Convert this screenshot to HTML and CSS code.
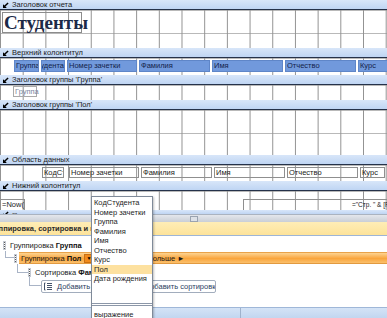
FILE: index.html
```html
<!DOCTYPE html>
<html lang="ru">
<head>
    <meta charset="UTF-8">
    <title>Отчет Студенты - конструктор</title>
    <link rel="stylesheet" href="styles.css">
</head>
<body>
<div class="window">
    <div class="designer">
        <div class="bar"><svg class="pin" viewBox="0 0 6 6"><polygon points="0,6 0,2.2 1.4,3.6 4.6,0.4 5.6,1.4 2.4,4.6 3.8,6"/></svg><span>Заголовок отчета</span></div>
        <div class="grid report-head">
            <div class="title">Студенты</div>
        </div>

        <div class="bar"><svg class="pin" viewBox="0 0 6 6"><polygon points="0,6 0,2.2 1.4,3.6 4.6,0.4 5.6,1.4 2.4,4.6 3.8,6"/></svg><span>Верхний колонтитул</span></div>
        <div class="grid page-head">
            <div class="hlabel" style="width:25px">Группа</div>
            <div class="hlabel right" style="width:24px"><span>КодСтудента</span></div>
            <div class="hlabel" style="width:70px">Номер зачетки</div>
            <div class="hlabel" style="width:71px">Фамилия</div>
            <div class="hlabel" style="width:71px">Имя</div>
            <div class="hlabel" style="width:71px">Отчество</div>
            <div class="hlabel" style="width:40px">Курс</div>
        </div>

        <div class="bar"><svg class="pin" viewBox="0 0 6 6"><polygon points="0,6 0,2.2 1.4,3.6 4.6,0.4 5.6,1.4 2.4,4.6 3.8,6"/></svg><span>Заголовок группы 'Группа'</span></div>
        <div class="grid group-head">
            <div class="glabel">Группа</div>
        </div>

        <div class="bar"><svg class="pin" viewBox="0 0 6 6"><polygon points="0,6 0,2.2 1.4,3.6 4.6,0.4 5.6,1.4 2.4,4.6 3.8,6"/></svg><span>Заголовок группы 'Пол'</span></div>
        <div class="grid sex-head"></div>

        <div class="bar"><svg class="pin" viewBox="0 0 6 6"><polygon points="0,6 0,2.2 1.4,3.6 4.6,0.4 5.6,1.4 2.4,4.6 3.8,6"/></svg><span>Область данных</span></div>
        <div class="grid data-row">
            <div class="field" style="width:22px">КодСтудента</div>
            <div class="field" style="width:70px;margin-left:3px">Номер зачетки</div>
            <div class="field" style="width:71px">Фамилия</div>
            <div class="field" style="width:71px">Имя</div>
            <div class="field" style="width:71px">Отчество</div>
            <div class="field" style="width:25px">Курс</div>
        </div>

        <div class="bar"><svg class="pin" viewBox="0 0 6 6"><polygon points="0,6 0,2.2 1.4,3.6 4.6,0.4 5.6,1.4 2.4,4.6 3.8,6"/></svg><span>Нижний колонтитул</span></div>
        <div class="grid page-foot">
            <div class="field now">=Now()</div>
            <div class="field pages">="Стр. " &amp; [Page] &amp; " из " &amp; [Pages]</div>
        </div>

        <div class="bar cut"><svg class="pin" viewBox="0 0 6 6"><polygon points="0,6 0,2.2 1.4,3.6 4.6,0.4 5.6,1.4 2.4,4.6 3.8,6"/></svg><span>Примечание отчета</span></div>
    </div>

    <div class="splitter"><span class="grip"></span></div>

    <div class="group-pane">
        <div class="pane-title"><span>Группировка, сортировка и итоги</span></div>
        <div class="pane-body">
            <div class="level level-1">
                <span class="handle"></span>
                <span>Группировка <b>Группа</b></span>
            </div>
            <div class="level level-2">
                <span class="handle"></span>
                <div class="active">
                    <span>Группировка <b>Пол</b></span>
                    <span class="drop">▼</span>
                    <span class="more">больше ►</span>
                </div>
            </div>
            <div class="level level-3">
                <span class="handle"></span>
                <span>Сортировка <b>Фамилия</b></span>
            </div>
            <div class="level level-4">
                <div class="add-btn first">
                    <svg class="add-icon" viewBox="0 0 9 9"><path d="M1.5 1h-1v7h1M3 1.5h5M3 3.5h5M3 5.5h5M3 7.5h5" fill="none" stroke="#44536b" stroke-width="1"/></svg>
                    <span>Добавить группу</span>
                </div>
                <div class="add-btn second"><span>Добавить сортировку</span></div>
            </div>
        </div>
        <div class="status"><span class="status-left"></span><span class="status-right"></span></div>
    </div>

    <div class="field-list">
        <div class="items">
            <div class="item">КодСтудента</div>
            <div class="item">Номер зачетки</div>
            <div class="item">Группа</div>
            <div class="item">Фамилия</div>
            <div class="item">Имя</div>
            <div class="item">Отчество</div>
            <div class="item">Курс</div>
            <div class="item selected">Пол</div>
            <div class="item">Дата рождения</div>
        </div>
        <div class="item expr">выражение</div>
    </div>
</div>
</body>
</html>
```

FILE: styles.css
```css
body {
    margin: 0;
    background: #fff;
    font-family: 'Liberation Sans', Arial, sans-serif;
    font-size: 7.5px;
    color: #1b1b1b;
}
.window {
    position: relative;
    width: 387px;
    height: 318px;
    overflow: hidden;
}
.designer {
    display: flex;
    flex-direction: column;
}
.bar {
    height: 9px;
    border-bottom: 1px solid #25324a;
    background: linear-gradient(#d8e6f9, #bfd5f3);
    display: flex;
    align-items: center;
    gap: 3px;
    padding-left: 3px;
    white-space: nowrap;
    overflow: hidden;
}
.pin {
    width: 6px;
    height: 6px;
    flex: none;
}
.bar.cut {
    height: 4px;
    align-items: flex-start;
    border-bottom: none;
    padding-top: 1px;
    box-sizing: border-box;
    color: #555;
}
.grid {
    background-color: #fff;
    background-image: linear-gradient(to right, #929292 1px, transparent 1px), linear-gradient(to bottom, #b9b9b9 1px, transparent 1px);
    background-size: 22.7px 100%, 100% 23px;
    background-position: 22.7px 0, 0 0;
    display: flex;
    align-items: flex-start;
}
.report-head {
    height: 38px;
}
.title {
    margin: 2px 0 0 2px;
    width: 80px;
    height: 21px;
    box-sizing: border-box;
    border: 1px solid #8c8c8c;
    font-family: 'Liberation Serif', 'Times New Roman', serif;
    font-weight: bold;
    font-size: 19px;
    line-height: 19px;
    padding-left: 1px;
    color: #1c2a48;
    white-space: nowrap;
}
.page-head {
    height: 17px;
    padding: 2px 0 0 14px;
    gap: 2px;
    box-sizing: border-box;
}
.hlabel {
    flex: none;
    height: 12px;
    box-sizing: border-box;
    background: #7199dc;
    border: 1px solid #5f86c8;
    color: #14224a;
    line-height: 10px;
    padding-left: 1px;
    white-space: nowrap;
    overflow: hidden;
}
.hlabel.right {
    display: flex;
    justify-content: flex-end;
}
.group-head {
    height: 15px;
    padding: 1px 0 0 13px;
    box-sizing: border-box;
}
.glabel {
    width: 24px;
    height: 11px;
    box-sizing: border-box;
    border: 1px solid #a9a9a9;
    color: #7c86a0;
    line-height: 9px;
    padding-left: 1px;
}
.sex-head {
    height: 45px;
}
.data-row {
    height: 16px;
    padding: 2px 0 0 42px;
    gap: 2px;
    box-sizing: border-box;
}
.field {
    flex: none;
    height: 11px;
    box-sizing: border-box;
    border: 1px solid #8f8f8f;
    line-height: 9px;
    padding-left: 1px;
    white-space: nowrap;
    overflow: hidden;
    color: #222;
}
.page-foot {
    height: 19px;
    padding-top: 8px;
    box-sizing: border-box;
}
.field.now {
    width: 25px;
    height: 12px;
}
.field.pages {
    margin-left: 218px;
    width: 220px;
    height: 12px;
    border-right: none;
    border-bottom: none;
    padding-left: 108px;
    font-size: 6.5px;
    line-height: 10px;
}
.splitter {
    height: 8px;
    background: linear-gradient(#e4e7ec, #c9ced6);
    border-top: 1px solid #aab3c0;
    box-sizing: border-box;
    display: flex;
    justify-content: center;
    align-items: center;
}
.grip {
    width: 6px;
    height: 4px;
    border: 1px solid #9aa3b0;
    background: #dde1e7;
}
.group-pane {
    display: flex;
    flex-direction: column;
}
.pane-title {
    height: 14px;
    background: linear-gradient(#feedb6, #fde39a);
    border-bottom: 1px solid #9db5d6;
    box-sizing: border-box;
    font-weight: bold;
    line-height: 13px;
    white-space: nowrap;
    overflow: hidden;
    color: #2a2a2a;
}
.pane-title span {
    margin-left: -14px;
}
.pane-body {
    height: 71px;
    padding-top: 4px;
    box-sizing: border-box;
    display: flex;
    flex-direction: column;
}
.level {
    position: relative;
    display: flex;
    align-items: center;
    gap: 4px;
    white-space: nowrap;
}
.level b {
    color: #111;
}
.handle {
    flex: none;
    width: 3px;
    height: 9px;
    box-sizing: border-box;
    border: 1px solid #c4c9d2;
    background: repeating-linear-gradient(to bottom, #5a5a5a 0 1px, transparent 1px 2px);
    background-size: 1px 100%;
    background-repeat: no-repeat;
    background-position: center;
}
.level-1 {
    height: 11px;
    margin-left: 3px;
}
.level-2 {
    height: 12px;
    margin-top: 1px;
    margin-left: 14px;
    gap: 2px;
}
.level-3 {
    height: 9px;
    margin-top: 4px;
    margin-left: 28px;
}
.level-4 {
    height: 13px;
    margin-top: 3px;
    margin-left: 41px;
    gap: 3px;
}
.level-2::before,
.level-3::before,
.level-4::before {
    content: "";
    position: absolute;
    border-left: 1px solid #a9b4c6;
    border-bottom: 1px solid #a9b4c6;
}
.level-2::before {
    left: -9px;
    top: -1px;
    width: 8px;
    height: 6px;
}
.level-3::before {
    left: -11px;
    top: -4px;
    width: 10px;
    height: 8px;
}
.level-4::before {
    left: -12px;
    top: -3px;
    width: 11px;
    height: 8px;
}
.active {
    flex: 1;
    height: 12px;
    display: flex;
    align-items: center;
    padding-left: 2px;
    background: linear-gradient(#fdd391, #f9a53d 55%, #fbc06c);
    border-top: 1px solid #e8a24a;
    border-bottom: 1px solid #e29a40;
    box-sizing: border-box;
}
.drop {
    margin-left: 3px;
    width: 9px;
    height: 9px;
    background: #f08a1c;
    border: 1px solid #c96f12;
    box-sizing: border-box;
    font-size: 5px;
    line-height: 7px;
    text-align: center;
    color: #000;
}
.more {
    margin-left: 55px;
}
.add-btn {
    height: 13px;
    display: flex;
    align-items: center;
    gap: 4px;
    border: 1px solid #a2adbd;
    border-radius: 2px;
    background: #fff;
    box-sizing: border-box;
    color: #2c3e5f;
    white-space: nowrap;
    overflow: hidden;
}
.add-btn.first {
    width: 99px;
    padding-left: 2px;
}
.add-btn.second {
    width: 73px;
    padding-left: 1px;
}
.add-icon {
    width: 9px;
    height: 9px;
    flex: none;
}
.status {
    height: 11px;
    background: linear-gradient(#d4e3f6, #c2d6f0);
    border-top: 1px solid #9fb7d8;
    box-sizing: border-box;
    display: flex;
}
.status-left {
    width: 240px;
    border-right: 1px solid #9fb2cc;
}
.field-list {
    position: absolute;
    left: 91px;
    top: 196px;
    width: 62px;
    height: 124px;
    box-sizing: border-box;
    background: #fff;
    border: 1px solid #7f8a99;
    box-shadow: 1px 1px 2px rgba(0, 0, 0, 0.25);
}
.items {
    height: 109px;
    padding-top: 1px;
    box-sizing: border-box;
    border-bottom: 3px double #8c97a8;
}
.item {
    height: 9.5px;
    line-height: 9.5px;
    padding-left: 2px;
    white-space: nowrap;
    color: #1e1e1e;
}
.item.selected {
    background: #fde1a0;
}
.item.expr {
    margin-top: 4px;
}
```
